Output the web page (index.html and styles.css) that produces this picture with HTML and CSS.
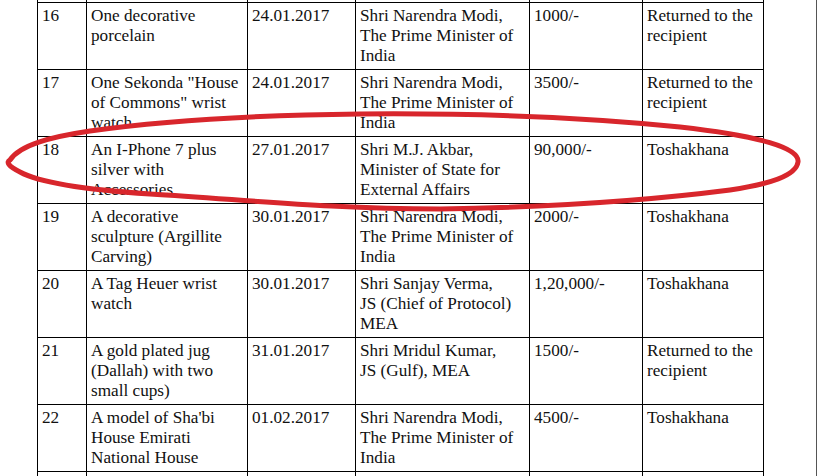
FILE: index.html
```html
<!DOCTYPE html>
<html>
<head>
<meta charset="utf-8">
<link rel="stylesheet" href="styles.css">
</head>
<body>
<div class="page">
  <table class="gifts">
    <colgroup>
      <col class="c-no"><col class="c-item"><col class="c-date"><col class="c-name"><col class="c-value"><col class="c-status">
    </colgroup>
    <tr><td></td><td></td><td></td><td class="name"></td><td></td><td></td></tr>
    <tr><td>16</td><td>One decorative porcelain</td><td>24.01.2017</td><td class="name">Shri Narendra Modi, The Prime Minister of India</td><td>1000/-</td><td>Returned to the recipient</td></tr>
    <tr><td>17</td><td>One Sekonda "House of Commons" wrist watch</td><td>24.01.2017</td><td class="name">Shri Narendra Modi, The Prime Minister of India</td><td>3500/-</td><td>Returned to the recipient</td></tr>
    <tr><td>18</td><td>An I-Phone 7 plus silver with Accessories</td><td>27.01.2017</td><td class="name">Shri M.J. Akbar, Minister of State for External Affairs</td><td>90,000/-</td><td>Toshakhana</td></tr>
    <tr><td>19</td><td>A decorative sculpture (Argillite Carving)</td><td>30.01.2017</td><td class="name">Shri Narendra Modi, The Prime Minister of India</td><td>2000/-</td><td>Toshakhana</td></tr>
    <tr><td>20</td><td>A Tag Heuer wrist watch</td><td>30.01.2017</td><td class="name">Shri Sanjay Verma, JS&nbsp;(Chief of Protocol) MEA</td><td>1,20,000/-</td><td>Toshakhana</td></tr>
    <tr><td>21</td><td>A gold plated jug (Dallah) with two small cups)</td><td>31.01.2017</td><td class="name">Shri Mridul Kumar, JS&nbsp;(Gulf), MEA</td><td>1500/-</td><td>Returned to the recipient</td></tr>
    <tr><td>22</td><td>A model of Sha'bi House Emirati National House</td><td>01.02.2017</td><td class="name">Shri Narendra Modi, The Prime Minister of India</td><td>4500/-</td><td>Toshakhana</td></tr>
    <tr><td></td><td></td><td></td><td class="name"></td><td></td><td></td></tr>
  </table>
  <svg class="mark" width="817" height="476" viewBox="0 0 817 476">
    <path d="M 10 160 C 20 145, 50 137, 90 131 C 160 121, 260 115, 360 114 C 470 113, 580 117, 680 127 C 760 136, 800 148, 798 162 C 796 176, 770 184, 730 190 C 660 199, 560 207, 440 209 C 330 209, 250 200, 150 194 C 90 190, 40 183, 20 172 C 8 166, 6 162, 10 160 Z" fill="none" stroke="#d8262c" stroke-width="5" stroke-linejoin="round"/>
  </svg>
</div>
</body>
</html>
```
FILE: styles.css
```css
html, body {
  margin: 0;
  padding: 0;
  background: #fff;
}

.page {
  position: relative;
  width: 816px;
  height: 476px;
  overflow: hidden;
  border-right: 1px solid #555;
  background: #fff;
}

.gifts {
  border-collapse: collapse;
  table-layout: fixed;
  width: 727px;
  margin-left: 37px;
  margin-top: -65px;
  font-family: "Liberation Serif", "Times New Roman", serif;
  font-size: 17.2px;
  line-height: 20px;
  color: #111;
}

.gifts tr {
  height: 67px;
}

.gifts td {
  border: 1px solid #000;
  padding: 3px 3px 3px 4px;
  vertical-align: top;
  text-align: left;
}

.gifts td.name {
  padding-right: 12px;
}

.c-no { width: 49px; }
.c-item { width: 161px; }
.c-date { width: 108px; }
.c-name { width: 174px; }
.c-value { width: 113px; }
.c-status { width: 121px; }

.mark {
  position: absolute;
  left: 0;
  top: 0;
  pointer-events: none;
}
```
